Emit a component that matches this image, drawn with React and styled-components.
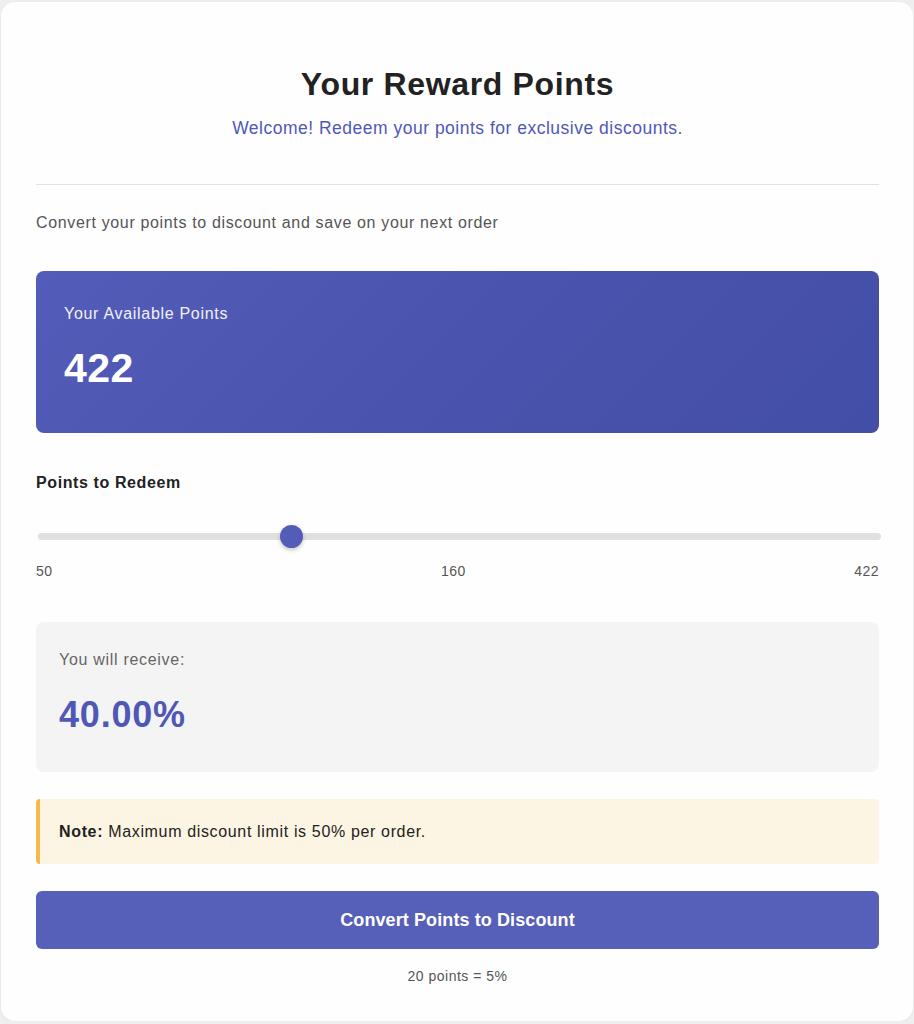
import React, { useState } from "react";
import styled, { createGlobalStyle } from "styled-components";

const GlobalStyle = createGlobalStyle`
  * { box-sizing: border-box; }
  html, body { margin: 0; padding: 0; }
  body {
    background: #efefef;
    font-family: "Liberation Sans", Arial, Helvetica, sans-serif;
    color: #222;
  }
`;

const Card = styled.main`
  margin: 2px 1px 0 1px;
  background: #fefefe;
  border-radius: 14px;
  box-shadow: 0 1px 3px rgba(0, 0, 0, 0.06);
  padding: 0 34px 35px 35px;
`;

const Header = styled.header`
  text-align: center;
  padding: 63px 0 44px;
  border-bottom: 1px solid #e2e2e2;
`;

const Title = styled.h1`
  margin: 0;
  font-size: 32px;
  line-height: 38px;
  font-weight: 700;
  letter-spacing: 0.65px;
  color: #222;
`;

const Subtitle = styled.p`
  margin: 13px 0 0;
  font-size: 17.5px;
  line-height: 24px;
  letter-spacing: 0.5px;
  color: #4f58b8;
`;

const Intro = styled.p`
  margin: 26px 0 0;
  font-size: 16px;
  line-height: 24px;
  letter-spacing: 0.65px;
  color: #555;
`;

const PointsCard = styled.section`
  margin-top: 36px;
  border-radius: 8px;
  padding: 31px 28px 41px;
  background: linear-gradient(135deg, #535cb8 0%, #4a54ae 50%, #434ea6 100%);
  color: #fff;
`;

const PointsLabel = styled.div`
  font-size: 16px;
  line-height: 24px;
  letter-spacing: 0.7px;
  opacity: 0.92;
`;

const PointsValue = styled.div`
  margin-top: 18px;
  font-size: 41px;
  line-height: 48px;
  font-weight: 700;
  letter-spacing: 0.5px;
`;

const SectionLabel = styled.label`
  display: block;
  margin-top: 38px;
  font-size: 16px;
  line-height: 24px;
  font-weight: 700;
  letter-spacing: 0.6px;
  color: #222;
`;

const Range = styled.input`
  -webkit-appearance: none;
  appearance: none;
  display: block;
  width: 100%;
  height: 24px;
  margin: 29px 2px 0 2px;
  background: transparent;
  outline: none;

  &::-webkit-slider-runnable-track {
    height: 7px;
    border-radius: 4px;
    background: #e0e0e0;
  }
  &::-webkit-slider-thumb {
    -webkit-appearance: none;
    appearance: none;
    width: 23px;
    height: 23px;
    margin-top: -8px;
    border-radius: 50%;
    background: #535db8;
    box-shadow: 0 2px 4px rgba(0, 0, 0, 0.22);
    cursor: pointer;
  }
`;

const RangeLabels = styled.div`
  display: flex;
  justify-content: space-between;
  margin-top: 13px;
  font-size: 14px;
  line-height: 20px;
  letter-spacing: 0.5px;
  color: #555;
`;

const ResultBox = styled.section`
  margin-top: 41px;
  background: #f4f4f4;
  border-radius: 8px;
  padding: 26px 23px 36px;
`;

const ResultLabel = styled.div`
  font-size: 16px;
  line-height: 24px;
  letter-spacing: 0.7px;
  color: #666;
`;

const ResultValue = styled.div`
  margin-top: 21px;
  font-size: 36px;
  line-height: 43px;
  font-weight: 700;
  letter-spacing: 0.8px;
  color: #5058b6;
`;

const Note = styled.div`
  margin-top: 27px;
  background: #fdf5e3;
  border-left: 4px solid #f4ba4a;
  border-radius: 4px;
  padding: 20px 19px;
  font-size: 16px;
  line-height: 25px;
  letter-spacing: 0.65px;
  color: #222;

  strong {
    font-weight: 700;
  }
`;

const Button = styled.button`
  display: block;
  width: 100%;
  margin-top: 27px;
  border: none;
  border-radius: 6px;
  background: #5660b8;
  color: #fff;
  font-family: inherit;
  font-size: 18px;
  line-height: 22px;
  font-weight: 700;
  letter-spacing: 0.1px;
  padding: 18px 0;
  cursor: pointer;
`;

const Footnote = styled.p`
  margin: 17px 0 0;
  text-align: center;
  font-size: 14px;
  line-height: 20px;
  letter-spacing: 0.5px;
  color: #555;
`;

export default function App() {
  const available = 422;
  const min = 50;
  const [value, setValue] = useState(160);
  const discount = Math.min(50, (value / 20) * 5);

  return (
    <>
      <GlobalStyle />
      <Card>
        <Header>
          <Title>Your Reward Points</Title>
          <Subtitle>Welcome! Redeem your points for exclusive discounts.</Subtitle>
        </Header>
        <Intro>Convert your points to discount and save on your next order</Intro>
        <PointsCard>
          <PointsLabel>Your Available Points</PointsLabel>
          <PointsValue>{available}</PointsValue>
        </PointsCard>
        <SectionLabel htmlFor="redeem">Points to Redeem</SectionLabel>
        <Range
          id="redeem"
          type="range"
          min={min}
          max={available}
          value={value}
          onChange={(e) => setValue(Number(e.target.value))}
        />
        <RangeLabels>
          <span>{min}</span>
          <span>{value}</span>
          <span>{available}</span>
        </RangeLabels>
        <ResultBox>
          <ResultLabel>You will receive:</ResultLabel>
          <ResultValue>{discount.toFixed(2)}%</ResultValue>
        </ResultBox>
        <Note>
          <strong>Note:</strong> Maximum discount limit is 50% per order.
        </Note>
        <Button type="button">Convert Points to Discount</Button>
        <Footnote>20 points = 5%</Footnote>
      </Card>
    </>
  );
}
